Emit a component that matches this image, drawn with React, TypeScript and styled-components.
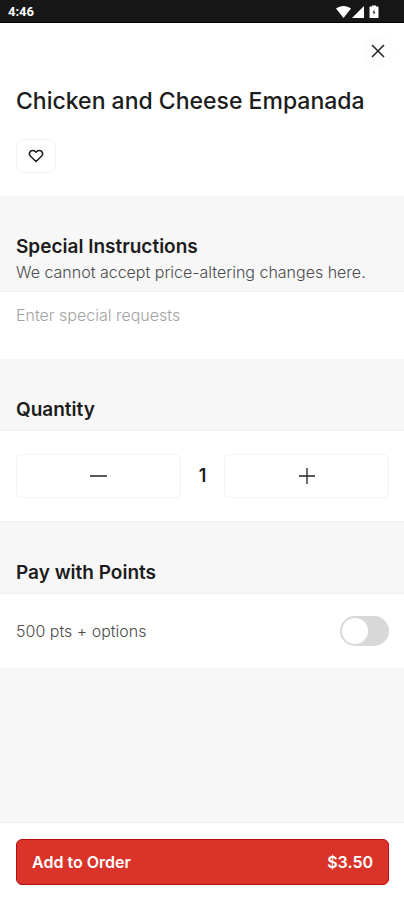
import React, { useState } from "react";
import styled, { createGlobalStyle } from "styled-components";

const GlobalStyle = createGlobalStyle`
  *, *::before, *::after { box-sizing: border-box; }
  body { margin: 0; background: #f7f7f7; color: #1c1c1c; font-family: Inter, "Liberation Sans", sans-serif; }
  button, input, textarea { font: inherit; color: inherit; margin: 0; }
  h1, h2, p { margin: 0; }
`;

const Screen = styled.div`
  min-height: 100vh;
  display: flex;
  flex-direction: column;
`;

const StatusBar = styled.div`
  display: flex;
  align-items: center;
  justify-content: space-between;
  height: 23px;
  padding: 2px 24px 0 8px;
  background: #171717;
  border-bottom: 1px solid #000;
  color: #fff;
  font: 700 13px/20px Roboto, sans-serif;
`;

const StatusIcons = styled.svg`
  display: block;
`;

const Header = styled.header`
  display: flex;
  flex-direction: column;
  align-items: flex-start;
  padding: 12px 15px 23px 16px;
  background: #fff;
`;

const CloseButton = styled.button`
  display: grid;
  place-items: center;
  align-self: flex-end;
  width: 32px;
  height: 32px;
  margin-right: -5px;
  padding: 0;
  border: 0;
  border-radius: 16px;
  background: #fdfdfd;
`;

const Title = styled.h1`
  margin-top: 18px;
  font-size: 23px;
  line-height: 32px;
  font-weight: 500;
`;

const FavoriteButton = styled.button`
  display: grid;
  place-items: center;
  width: 40px;
  height: 34px;
  margin-top: 22px;
  padding: 0;
  border: 1px solid #f1f1f1;
  border-radius: 7px;
  background: #fff;
`;

const SectionHead = styled.div`
  padding: 38px 15px 7px 16px;
  border-bottom: 1px solid #f1f1f1;
`;

const SectionTitle = styled.h2`
  font-size: 19px;
  line-height: 26px;
  font-weight: 600;
`;

const Hint = styled.p`
  font-size: 16px;
  line-height: 24px;
  font-weight: 300;
  color: #4c4c4c;
`;

const Requests = styled.textarea`
  display: block;
  width: 100%;
  height: 67px;
  padding: 11px 16px;
  border: 0;
  resize: none;
  background: #fff;
  font-size: 16px;
  line-height: 24px;
  font-weight: 300;
  &::placeholder { color: #a3a3a3; opacity: 1; }
`;

const QuantityRow = styled.div`
  display: grid;
  grid-template-columns: 1fr 43px 1fr;
  align-items: center;
  padding: 23px 15px 23px 16px;
  border-bottom: 1px solid #f1f1f1;
  background: #fff;
`;

const StepButton = styled.button`
  display: grid;
  place-items: center;
  height: 44px;
  padding: 0;
  border: 1px solid #f3f3f3;
  border-radius: 6px;
  background: #fff;
`;

const Count = styled.output`
  text-align: center;
  font-size: 18px;
  line-height: 24px;
  font-weight: 600;
`;

const PointsRow = styled.label`
  display: flex;
  align-items: center;
  justify-content: space-between;
  height: 74px;
  padding: 0 15px 0 16px;
  background: #fff;
  color: #4c4c4c;
  font-size: 16px;
  line-height: 24px;
  font-weight: 300;
`;

const Toggle = styled.input`
  appearance: none;
  display: flex;
  align-items: center;
  width: 49px;
  height: 30px;
  padding: 0 2px;
  border-radius: 15px;
  background: #d8d8d8;
  &::before {
    content: "";
    width: 26px;
    height: 26px;
    border-radius: 13px;
    background: #fff;
  }
  &:checked { background: #da3329; justify-content: flex-end; }
`;

const Footer = styled.footer`
  margin-top: auto;
  padding: 16px 15px 15px 16px;
  border-top: 1px solid #ececec;
  background: #fff;
`;

const OrderButton = styled.button`
  display: flex;
  align-items: center;
  justify-content: space-between;
  width: 100%;
  height: 46px;
  padding: 0 15px;
  border: 1px solid #b90f10;
  border-radius: 6px;
  background: #da3329;
  color: #fff;
  font-size: 16px;
  line-height: 24px;
  font-weight: 600;
`;

export default function App() {
  const [quantity, setQuantity] = useState(1);
  const [favorite, setFavorite] = useState(false);

  return (
    <Screen>
      <GlobalStyle />
      <StatusBar>
        <span>4:46</span>
        <StatusIcons width="44" height="14" viewBox="0 0 44 14" fill="#fff" aria-hidden="true">
          <path d="M0 3.5C4.5 0 10.5 0 15 3.5L7.5 13Z" />
          <path d="M28 1V13H16Z" />
          <path fillRule="evenodd" d="M36 .5h4v1h2l.5.5V12.5l-.5.5h-8l-.5-.5V2l.5-.5h2ZM38.3 4.5l-1.6 3h1v2.5l1.6-3h-1Z" />
        </StatusIcons>
      </StatusBar>
      <main>
        <Header>
          <CloseButton type="button" aria-label="Close">
            <svg width="14" height="14" viewBox="0 0 14 14" fill="none" stroke="#222" strokeWidth="1.5">
              <path d="M1 1l12 12M13 1L1 13" />
            </svg>
          </CloseButton>
          <Title>Chicken and Cheese Empanada</Title>
          <FavoriteButton
            type="button"
            aria-label="Add to favorites"
            aria-pressed={favorite}
            onClick={() => setFavorite(!favorite)}
          >
            <svg width="16" height="14" viewBox="0 0 16 14" fill={favorite ? "#1c1c1c" : "none"} stroke="#1c1c1c" strokeWidth="1.5" strokeLinejoin="round">
              <path d="M8 12.5L2.5 7.3C1.2 5.9 1.2 3.7 2.5 2.4C3.8 1.1 6 1.2 7.2 2.5L8 3.3L8.8 2.5C10 1.2 12.2 1.1 13.5 2.4C14.8 3.7 14.8 5.9 13.5 7.3Z" />
            </svg>
          </FavoriteButton>
        </Header>

        <SectionHead>
          <SectionTitle id="requests-title">Special Instructions</SectionTitle>
          <Hint id="requests-hint">We cannot accept price-altering changes here.</Hint>
        </SectionHead>
        <Requests
          aria-labelledby="requests-title"
          aria-describedby="requests-hint"
          placeholder="Enter special requests"
        />

        <SectionHead>
          <SectionTitle>Quantity</SectionTitle>
        </SectionHead>
        <QuantityRow>
          <StepButton type="button" aria-label="Decrease quantity" onClick={() => setQuantity(Math.max(1, quantity - 1))}>
            <svg width="18" height="18" viewBox="0 0 18 18" stroke="#222" strokeWidth="1.5">
              <path d="M0 9h17" />
            </svg>
          </StepButton>
          <Count>{quantity}</Count>
          <StepButton type="button" aria-label="Increase quantity" onClick={() => setQuantity(quantity + 1)}>
            <svg width="18" height="18" viewBox="0 0 18 18" stroke="#222" strokeWidth="1.3">
              <path d="M1 9h16M9 1v16" />
            </svg>
          </StepButton>
        </QuantityRow>

        <SectionHead>
          <SectionTitle>Pay with Points</SectionTitle>
        </SectionHead>
        <PointsRow>
          500 pts + options
          <Toggle type="checkbox" role="switch" />
        </PointsRow>
      </main>
      <Footer>
        <OrderButton type="button">
          <span>Add to Order</span>
          <span>$3.50</span>
        </OrderButton>
      </Footer>
    </Screen>
  );
}
